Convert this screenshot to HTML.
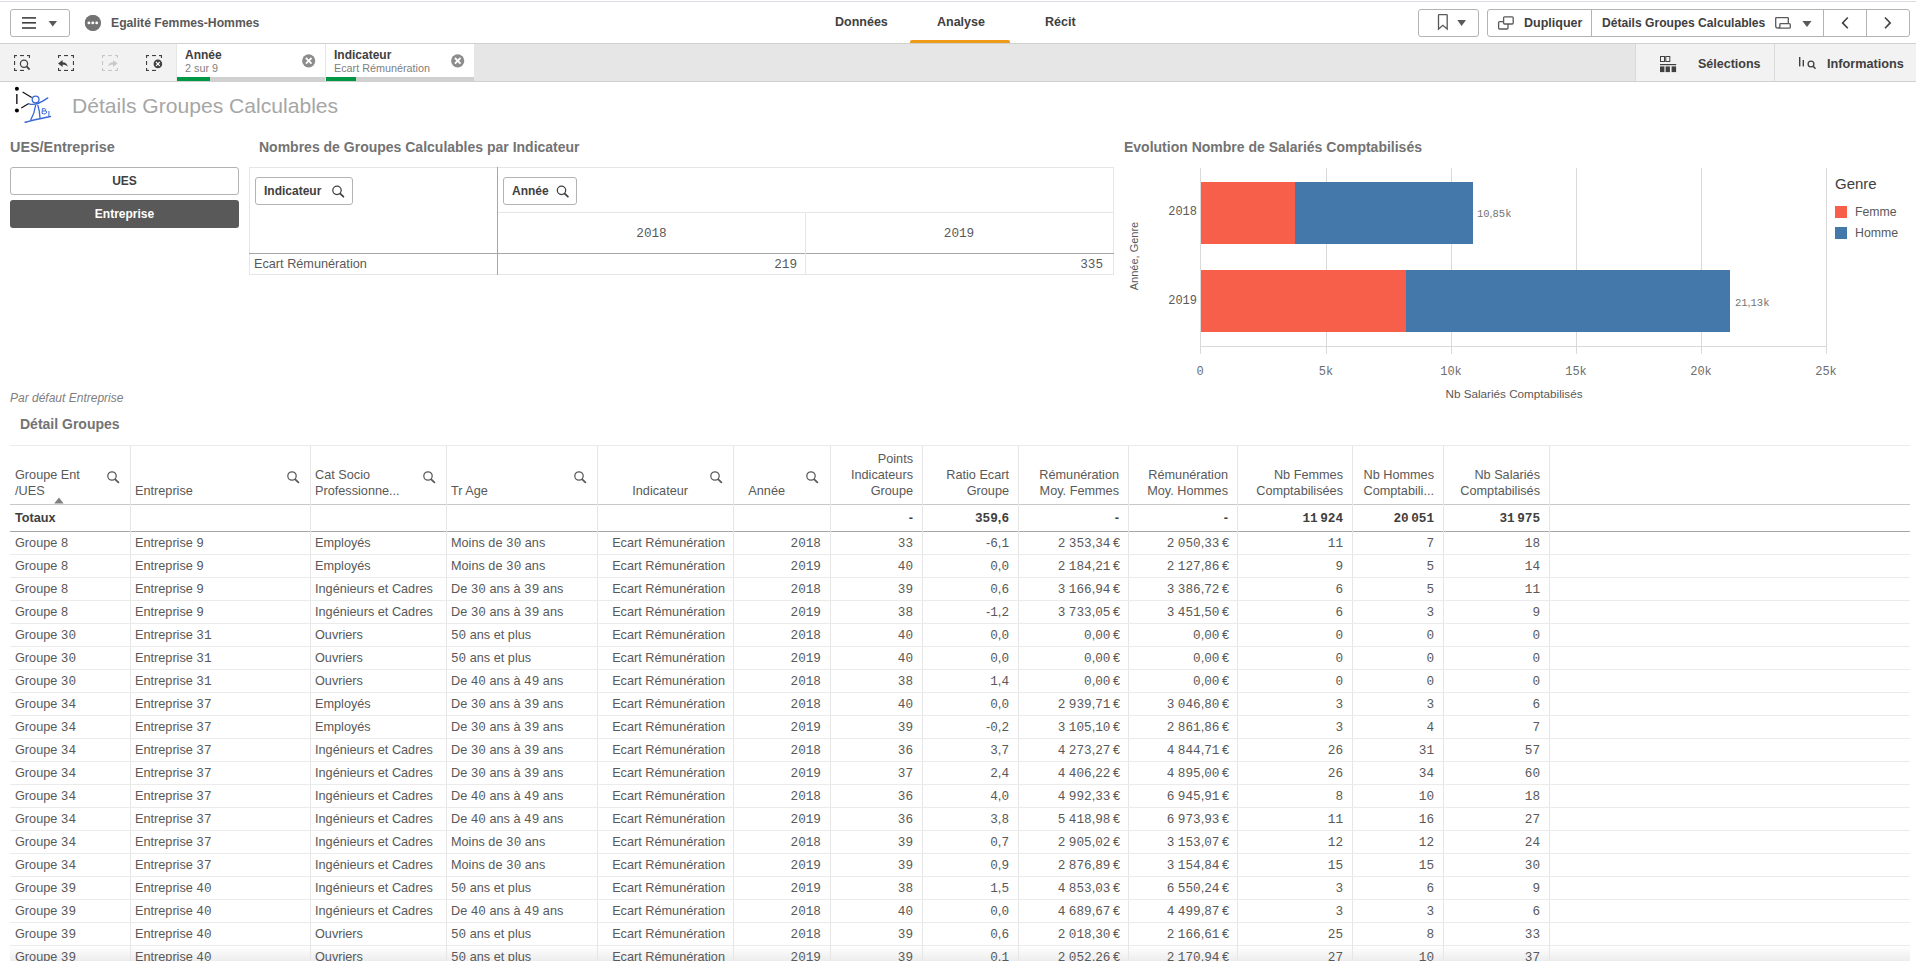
<!DOCTYPE html>
<html><head><meta charset="utf-8"><style>
*{box-sizing:border-box;margin:0;padding:0}
html,body{width:1916px;height:968px;overflow:hidden;background:#fff;font-family:"Liberation Sans",sans-serif;color:#595959;position:relative}
.a{position:absolute;white-space:nowrap}
.d{font-family:"Liberation Mono",monospace}
/* top bar */
#top{position:absolute;left:0;top:0;width:1916px;height:43px;background:#fff;border-top:1px solid #fff}
#top:before{content:"";position:absolute;left:0;top:0;width:1916px;height:1px;background:#dadce1}
.btn{position:absolute;border:1px solid #b3b3b3;border-radius:3px;background:#fff}
.tb{font-weight:bold;font-size:12.5px;color:#404040}
#tool{position:absolute;left:0;top:43px;width:1916px;height:39px;background:#e6e6e6;border-top:1px solid #d0d0d0;border-bottom:1px solid #d0d0d0}
.chip{position:absolute;top:0;height:37px;width:148px;background:#fff}
.chip .g{position:absolute;left:0;bottom:0;height:4px;width:100%;background:#d0d0d0}
.chip .g i{position:absolute;left:0;top:0;height:4px;background:#009845}
.ct{position:absolute;left:8px;top:4px;font-size:12px;font-weight:bold;color:#404040}
.cs{position:absolute;left:8px;top:18px;font-size:10.8px;color:#808080}
.cx{position:absolute;top:10px;width:14px;height:14px;border-radius:50%;background:#8c8c8c}
/* table */
.vl{position:absolute;top:446px;width:1px;height:515px;background:#e6e6e6}
.row{position:absolute;left:10px;width:1900px;height:1px;background:#ebebeb}
.c{position:absolute;height:22px;line-height:22px;font-size:12.7px;white-space:nowrap;color:#595959}
.r{text-align:right}
.h{position:absolute;font-size:12.7px;line-height:16px;white-space:nowrap;color:#595959}
.tt{font-weight:bold;color:#404040}

</style></head><body>
<div id="top">
  <div class="btn" style="left:10px;top:8px;width:60px;height:28px"></div>
  <div class="a" style="left:85px;top:14px;width:16px;height:16px;border-radius:50%;background:#808080"></div>
  <div class="a tb" style="left:111px;top:15px;color:#595959;font-size:12.2px">Egalité Femmes-Hommes</div>
  <div class="a tb" style="left:835px;top:14px">Données</div>
  <div class="a tb" style="left:937px;top:14px">Analyse</div>
  <div class="a" style="left:910px;top:39px;width:100px;height:3px;background:#f09a1a;border-radius:2px 2px 0 0"></div>
  <div class="a tb" style="left:1045px;top:14px">Récit</div>
  <div class="btn" style="left:1418px;top:8px;width:61px;height:28px"></div>
  <div class="btn" style="left:1487px;top:8px;width:423px;height:28px"></div>
  <div class="a tb" style="left:1524px;top:15px">Dupliquer</div>
  <div class="a" style="left:1591px;top:9px;width:1px;height:27px;background:#b3b3b3"></div>
  <div class="a" style="left:1823px;top:9px;width:1px;height:27px;background:#b3b3b3"></div>
  <div class="a" style="left:1866px;top:9px;width:1px;height:27px;background:#b3b3b3"></div>
  <div class="a tb" style="left:1602px;top:15px;font-size:12.1px">Détails Groupes Calculables</div>
</div>
<div id="tool">
  <div class="a" style="left:0;top:0;width:176px;height:37px;background:#f2f2f2"></div>
  <div class="chip" style="left:177px"><div class="ct">Année</div><div class="cs">2 sur 9</div><div class="g"><i style="width:33px"></i></div></div>
  <div class="chip" style="left:326px"><div class="ct">Indicateur</div><div class="cs">Ecart Rémunération</div><div class="g"><i style="width:30px"></i></div></div>
  <div class="a" style="left:1635px;top:0;width:281px;height:37px;background:#f2f2f2;border-left:1px solid #d9d9d9"></div>
  <div class="a tb" style="left:1698px;top:13px">Sélections</div>
  <div class="a" style="left:1774px;top:0;width:1px;height:37px;background:#d9d9d9"></div>
  <div class="a tb" style="left:1827px;top:13px;font-size:12.7px">Informations</div>
</div>
<div class="a" style="left:72px;top:94px;font-size:21.1px;color:#a6a6a6">Détails Groupes Calculables</div>
<div class="a" style="left:10px;top:139px;font-size:14.4px;font-weight:bold;color:#737373">UES/Entreprise</div>
<div class="btn" style="left:10px;top:167px;width:229px;height:28px;text-align:center;line-height:26px;font-size:12px;font-weight:bold;color:#404040">UES</div>
<div class="a" style="left:10px;top:200px;width:229px;height:28px;background:#595959;border-radius:3px;text-align:center;line-height:28px;font-size:12px;font-weight:bold;color:#fff">Entreprise</div>
<div class="a" style="left:259px;top:139px;font-size:14px;font-weight:bold;color:#737373">Nombres de Groupes Calculables par Indicateur</div>
<div class="a" style="left:1124px;top:139px;font-size:14px;font-weight:bold;color:#737373">Evolution Nombre de Salariés Comptabilisés</div>
<div class="a" style="left:10px;top:391px;font-size:12px;font-style:italic;color:#808080">Par défaut Entreprise</div>
<div class="a" style="left:20px;top:416px;font-size:14px;font-weight:bold;color:#737373">Détail Groupes</div>
<div class="a" style="left:10px;top:445px;width:1900px;height:1px;background:#ebebeb"></div>
<div class="a" style="left:10px;top:504px;width:1900px;height:1px;background:#c8c8c8"></div>
<div class="a" style="left:10px;top:531px;width:1900px;height:1px;background:#a6a6a6"></div>
<svg class="a" style="left:0;top:0;pointer-events:none" width="1916" height="130">
<!-- hamburger -->
<g fill="#404040"><rect x="22" y="17.1" width="14" height="1.6"/><rect x="22" y="22" width="14" height="1.6"/><rect x="22" y="27.2" width="14" height="1.6"/></g>
<path d="M48.6,21 H57 L52.8,26.6 Z" fill="#595959"/>
<!-- dots -->
<circle cx="92.8" cy="22.9" r="8" fill="#737373"/>
<g fill="#fff"><circle cx="88.9" cy="22.9" r="1.45"/><circle cx="92.8" cy="22.9" r="1.45"/><circle cx="96.7" cy="22.9" r="1.45"/></g>
<!-- bookmark -->
<path d="M1438.5,29 V15.2 Q1438.5,14.6 1439.1,14.6 H1446.6 Q1447.2,14.6 1447.2,15.2 V29 L1442.9,25.3 Z" fill="none" stroke="#595959" stroke-width="1.3" stroke-linejoin="miter"/>
<path d="M1457.3,19.9 H1466 L1461.6,25.9 Z" fill="#595959"/>
<!-- duplicate -->
<rect x="1498.6" y="21.6" width="9.4" height="7.4" rx="1" fill="none" stroke="#595959" stroke-width="1.3"/>
<rect x="1503.6" y="16.8" width="9.6" height="7.2" rx="1" fill="#fff" stroke="#595959" stroke-width="1.3"/>
<!-- sheet icon -->
<path d="M1788.3,23.6 V18.2 Q1788.3,17.6 1787.7,17.6 H1776.3 Q1775.7,17.6 1775.7,18.2 V26 Q1775.7,28.1 1777.8,28.1 H1789.2 Q1790.3,28.1 1790.3,26.9 V25 Q1790.3,23.6 1789.2,23.6 H1780.6 Q1779.9,23.6 1779.9,24.3 V26 Q1779.9,28.1 1777.8,28.1" fill="none" stroke="#595959" stroke-width="1.3"/>
<path d="M1802.4,21.1 H1811.5 L1807,27 Z" fill="#595959"/>
<!-- prev/next -->
<path d="M1847.8,17.5 L1842.6,22.9 L1847.8,28.3" fill="none" stroke="#404040" stroke-width="1.6"/>
<path d="M1885,17.5 L1890.2,22.9 L1885,28.3" fill="none" stroke="#404040" stroke-width="1.6"/>
<!-- toolbar icons -->
<g fill="#404040" transform="translate(0,0)"><rect x="14" y="55" width="3" height="1.1"/><rect x="14" y="55" width="1.1" height="3"/><rect x="20" y="55" width="4" height="1.1"/><rect x="27" y="55" width="3" height="1.1"/><rect x="28.9" y="55" width="1.1" height="3"/><rect x="14" y="61" width="1.1" height="4"/><rect x="14" y="69.9" width="3" height="1.1"/><rect x="14" y="68" width="1.1" height="3"/><rect x="20" y="69.9" width="4" height="1.1"/></g>
<circle cx="24" cy="63.8" r="3.6" fill="none" stroke="#404040" stroke-width="1.25"/>
<path d="M26.6,66.4 L29.6,69.6" stroke="#404040" stroke-width="1.8"/>
<g fill="#404040" transform="translate(44,0)"><rect x="14" y="55" width="3" height="1.1"/><rect x="14" y="55" width="1.1" height="3"/><rect x="20" y="55" width="4" height="1.1"/><rect x="27" y="55" width="3" height="1.1"/><rect x="28.9" y="55" width="1.1" height="3"/><rect x="28.9" y="61" width="1.1" height="4"/><rect x="14" y="69.9" width="3" height="1.1"/><rect x="14" y="68" width="1.1" height="3"/><rect x="20" y="69.9" width="4" height="1.1"/><rect x="27" y="69.9" width="3" height="1.1"/><rect x="28.9" y="68" width="1.1" height="3"/></g>
<path d="M58,63.5 L62.6,60 V62.2 C65.5,62.3 67.3,64 67.9,66.8 C66.6,65.3 65,64.8 62.6,64.8 V67 Z" fill="#404040"/>
<g fill="#c8c8c8" transform="translate(88,0)"><rect x="14" y="55" width="3" height="1.1"/><rect x="14" y="55" width="1.1" height="3"/><rect x="20" y="55" width="4" height="1.1"/><rect x="27" y="55" width="3" height="1.1"/><rect x="28.9" y="55" width="1.1" height="3"/><rect x="14" y="61" width="1.1" height="4"/><rect x="14" y="69.9" width="3" height="1.1"/><rect x="14" y="68" width="1.1" height="3"/><rect x="20" y="69.9" width="4" height="1.1"/><rect x="27" y="69.9" width="3" height="1.1"/><rect x="28.9" y="68" width="1.1" height="3"/></g>
<path d="M117.6,63.5 L113,60 V62.2 C110.1,62.3 108.3,64 107.7,66.8 C109,65.3 110.6,64.8 113,64.8 V67 Z" fill="#fff"/>
<path d="M117.6,63.5 L113,60 V62.2 C110.1,62.3 108.3,64 107.7,66.8 C109,65.3 110.6,64.8 113,64.8 V67 Z" fill="#c8c8c8"/>
<g fill="#404040" transform="translate(132,0)"><rect x="14" y="55" width="3" height="1.1"/><rect x="14" y="55" width="1.1" height="3"/><rect x="20" y="55" width="4" height="1.1"/><rect x="27" y="55" width="3" height="1.1"/><rect x="28.9" y="55" width="1.1" height="3"/><rect x="14" y="61" width="1.1" height="4"/><rect x="14" y="69.9" width="3" height="1.1"/><rect x="14" y="68" width="1.1" height="3"/><rect x="20" y="69.9" width="4" height="1.1"/></g>
<circle cx="157.9" cy="63.9" r="4.3" fill="#404040"/>
<path d="M156,62 L159.8,65.8 M159.8,62 L156,65.8" stroke="#fff" stroke-width="1.1"/>
<!-- chip X -->
<circle cx="308.7" cy="60.8" r="6.6" fill="#8c8c8c"/>
<path d="M305.9,58 L311.5,63.6 M311.5,58 L305.9,63.6" stroke="#fff" stroke-width="1.8"/>
<circle cx="457.7" cy="60.8" r="6.6" fill="#8c8c8c"/>
<path d="M454.9,58 L460.5,63.6 M460.5,58 L454.9,63.6" stroke="#fff" stroke-width="1.8"/>
<!-- selections icon -->
<g fill="none" stroke="#404040" stroke-width="1"><rect x="1660.5" y="56.5" width="4" height="5"/><rect x="1665.8" y="56.5" width="4" height="5"/></g>
<rect x="1660" y="64" width="16.2" height="1.2" fill="#404040"/>
<g fill="#404040"><rect x="1660" y="66.4" width="4.4" height="5.7"/><rect x="1665.6" y="66.4" width="4.3" height="5.7"/><rect x="1671.6" y="66.4" width="4.5" height="5.7"/></g>
<!-- info icon -->
<g fill="#404040"><rect x="1799" y="57" width="1.4" height="9.4"/><rect x="1802.6" y="60" width="1.4" height="6.4"/></g>
<circle cx="1811" cy="64" r="2.9" fill="none" stroke="#404040" stroke-width="1.3"/>
<path d="M1813,66 L1815.5,68.8" stroke="#404040" stroke-width="1.5"/>
<!-- logo -->
<g fill="#000"><circle cx="16.9" cy="88.8" r="2"/><circle cx="16.9" cy="110.5" r="2"/></g>
<path d="M16.8,94 L16.8,104" stroke="#333" stroke-width="1.6"/>
<path d="M22.6,92 L31.7,97.5 M21.3,107.9 L28.7,103.6" stroke="#111" stroke-width="1.2"/>
<g fill="none" stroke="#3a6ad4" stroke-width="1.3" stroke-linecap="round">
<circle cx="35.6" cy="99.5" r="3.4"/>
<path d="M29.1,103.8 Q36,106.5 47.8,97.9"/>
<path d="M35.6,105.3 Q34.5,113 30.9,119.6 M37.8,105.3 Q39.8,111 40,117.9"/>
<path d="M25.2,122.3 Q30,120.5 50.4,116.4" stroke-width="1.5"/>
<path d="M42.8,108.6 Q46.5,108.2 45.7,110.6 Q48,111.8 45.5,113.8 Q43.5,114.2 42.4,113.6 Z M42.6,111 H45.5" stroke-width="1"/>
<path d="M48.9,111.4 V116.4" stroke-width="1"/>
</g>
</svg>


<!--SRCH-->
<div class="a" style="left:10px;top:946px;width:1900px;height:15px;background:linear-gradient(#fff,#ededed)"></div>
<div class="tbl">
<div class="vl" style="left:130px"></div>
<div class="vl" style="left:310px"></div>
<div class="vl" style="left:446px"></div>
<div class="vl" style="left:597px"></div>
<div class="vl" style="left:733px"></div>
<div class="vl" style="left:830px"></div>
<div class="vl" style="left:922px"></div>
<div class="vl" style="left:1018px"></div>
<div class="vl" style="left:1128px"></div>
<div class="vl" style="left:1237px"></div>
<div class="vl" style="left:1352px"></div>
<div class="vl" style="left:1443px"></div>
<div class="vl" style="left:1549px"></div>
</div>
<div class="row" style="top:554px"></div>
<div class="c" style="left:15px;top:532px">Groupe <span class="d">8</span></div>
<div class="c" style="left:135px;top:532px">Entreprise <span class="d">9</span></div>
<div class="c" style="left:315px;top:532px">Employés</div>
<div class="c" style="left:451px;top:532px">Moins de <span class="d">30</span> ans</div>
<div class="c r" style="left:597px;width:128px;top:532px">Ecart Rémunération</div>
<div class="c r" style="left:733px;width:88px;top:532px"><span class="d">2018</span></div>
<div class="c r" style="left:830px;width:83px;top:532px"><span class="d">33</span></div>
<div class="c r" style="left:922px;width:87px;top:532px">-<span class="d">6</span>,<span class="d">1</span></div>
<div class="c r" style="left:1018px;width:102px;top:532px"><span class="d">2</span> <span class="d">353</span>,<span class="d">34</span>&#8201;€</div>
<div class="c r" style="left:1128px;width:101px;top:532px"><span class="d">2</span> <span class="d">050</span>,<span class="d">33</span>&#8201;€</div>
<div class="c r" style="left:1237px;width:106px;top:532px"><span class="d">11</span></div>
<div class="c r" style="left:1352px;width:82px;top:532px"><span class="d">7</span></div>
<div class="c r" style="left:1443px;width:97px;top:532px"><span class="d">18</span></div>
<div class="row" style="top:577px"></div>
<div class="c" style="left:15px;top:555px">Groupe <span class="d">8</span></div>
<div class="c" style="left:135px;top:555px">Entreprise <span class="d">9</span></div>
<div class="c" style="left:315px;top:555px">Employés</div>
<div class="c" style="left:451px;top:555px">Moins de <span class="d">30</span> ans</div>
<div class="c r" style="left:597px;width:128px;top:555px">Ecart Rémunération</div>
<div class="c r" style="left:733px;width:88px;top:555px"><span class="d">2019</span></div>
<div class="c r" style="left:830px;width:83px;top:555px"><span class="d">40</span></div>
<div class="c r" style="left:922px;width:87px;top:555px"><span class="d">0</span>,<span class="d">0</span></div>
<div class="c r" style="left:1018px;width:102px;top:555px"><span class="d">2</span> <span class="d">184</span>,<span class="d">21</span>&#8201;€</div>
<div class="c r" style="left:1128px;width:101px;top:555px"><span class="d">2</span> <span class="d">127</span>,<span class="d">86</span>&#8201;€</div>
<div class="c r" style="left:1237px;width:106px;top:555px"><span class="d">9</span></div>
<div class="c r" style="left:1352px;width:82px;top:555px"><span class="d">5</span></div>
<div class="c r" style="left:1443px;width:97px;top:555px"><span class="d">14</span></div>
<div class="row" style="top:600px"></div>
<div class="c" style="left:15px;top:578px">Groupe <span class="d">8</span></div>
<div class="c" style="left:135px;top:578px">Entreprise <span class="d">9</span></div>
<div class="c" style="left:315px;top:578px">Ingénieurs et Cadres</div>
<div class="c" style="left:451px;top:578px">De <span class="d">30</span> ans à <span class="d">39</span> ans</div>
<div class="c r" style="left:597px;width:128px;top:578px">Ecart Rémunération</div>
<div class="c r" style="left:733px;width:88px;top:578px"><span class="d">2018</span></div>
<div class="c r" style="left:830px;width:83px;top:578px"><span class="d">39</span></div>
<div class="c r" style="left:922px;width:87px;top:578px"><span class="d">0</span>,<span class="d">6</span></div>
<div class="c r" style="left:1018px;width:102px;top:578px"><span class="d">3</span> <span class="d">166</span>,<span class="d">94</span>&#8201;€</div>
<div class="c r" style="left:1128px;width:101px;top:578px"><span class="d">3</span> <span class="d">386</span>,<span class="d">72</span>&#8201;€</div>
<div class="c r" style="left:1237px;width:106px;top:578px"><span class="d">6</span></div>
<div class="c r" style="left:1352px;width:82px;top:578px"><span class="d">5</span></div>
<div class="c r" style="left:1443px;width:97px;top:578px"><span class="d">11</span></div>
<div class="row" style="top:623px"></div>
<div class="c" style="left:15px;top:601px">Groupe <span class="d">8</span></div>
<div class="c" style="left:135px;top:601px">Entreprise <span class="d">9</span></div>
<div class="c" style="left:315px;top:601px">Ingénieurs et Cadres</div>
<div class="c" style="left:451px;top:601px">De <span class="d">30</span> ans à <span class="d">39</span> ans</div>
<div class="c r" style="left:597px;width:128px;top:601px">Ecart Rémunération</div>
<div class="c r" style="left:733px;width:88px;top:601px"><span class="d">2019</span></div>
<div class="c r" style="left:830px;width:83px;top:601px"><span class="d">38</span></div>
<div class="c r" style="left:922px;width:87px;top:601px">-<span class="d">1</span>,<span class="d">2</span></div>
<div class="c r" style="left:1018px;width:102px;top:601px"><span class="d">3</span> <span class="d">733</span>,<span class="d">05</span>&#8201;€</div>
<div class="c r" style="left:1128px;width:101px;top:601px"><span class="d">3</span> <span class="d">451</span>,<span class="d">50</span>&#8201;€</div>
<div class="c r" style="left:1237px;width:106px;top:601px"><span class="d">6</span></div>
<div class="c r" style="left:1352px;width:82px;top:601px"><span class="d">3</span></div>
<div class="c r" style="left:1443px;width:97px;top:601px"><span class="d">9</span></div>
<div class="row" style="top:646px"></div>
<div class="c" style="left:15px;top:624px">Groupe <span class="d">30</span></div>
<div class="c" style="left:135px;top:624px">Entreprise <span class="d">31</span></div>
<div class="c" style="left:315px;top:624px">Ouvriers</div>
<div class="c" style="left:451px;top:624px"><span class="d">50</span> ans et plus</div>
<div class="c r" style="left:597px;width:128px;top:624px">Ecart Rémunération</div>
<div class="c r" style="left:733px;width:88px;top:624px"><span class="d">2018</span></div>
<div class="c r" style="left:830px;width:83px;top:624px"><span class="d">40</span></div>
<div class="c r" style="left:922px;width:87px;top:624px"><span class="d">0</span>,<span class="d">0</span></div>
<div class="c r" style="left:1018px;width:102px;top:624px"><span class="d">0</span>,<span class="d">00</span>&#8201;€</div>
<div class="c r" style="left:1128px;width:101px;top:624px"><span class="d">0</span>,<span class="d">00</span>&#8201;€</div>
<div class="c r" style="left:1237px;width:106px;top:624px"><span class="d">0</span></div>
<div class="c r" style="left:1352px;width:82px;top:624px"><span class="d">0</span></div>
<div class="c r" style="left:1443px;width:97px;top:624px"><span class="d">0</span></div>
<div class="row" style="top:669px"></div>
<div class="c" style="left:15px;top:647px">Groupe <span class="d">30</span></div>
<div class="c" style="left:135px;top:647px">Entreprise <span class="d">31</span></div>
<div class="c" style="left:315px;top:647px">Ouvriers</div>
<div class="c" style="left:451px;top:647px"><span class="d">50</span> ans et plus</div>
<div class="c r" style="left:597px;width:128px;top:647px">Ecart Rémunération</div>
<div class="c r" style="left:733px;width:88px;top:647px"><span class="d">2019</span></div>
<div class="c r" style="left:830px;width:83px;top:647px"><span class="d">40</span></div>
<div class="c r" style="left:922px;width:87px;top:647px"><span class="d">0</span>,<span class="d">0</span></div>
<div class="c r" style="left:1018px;width:102px;top:647px"><span class="d">0</span>,<span class="d">00</span>&#8201;€</div>
<div class="c r" style="left:1128px;width:101px;top:647px"><span class="d">0</span>,<span class="d">00</span>&#8201;€</div>
<div class="c r" style="left:1237px;width:106px;top:647px"><span class="d">0</span></div>
<div class="c r" style="left:1352px;width:82px;top:647px"><span class="d">0</span></div>
<div class="c r" style="left:1443px;width:97px;top:647px"><span class="d">0</span></div>
<div class="row" style="top:692px"></div>
<div class="c" style="left:15px;top:670px">Groupe <span class="d">30</span></div>
<div class="c" style="left:135px;top:670px">Entreprise <span class="d">31</span></div>
<div class="c" style="left:315px;top:670px">Ouvriers</div>
<div class="c" style="left:451px;top:670px">De <span class="d">40</span> ans à <span class="d">49</span> ans</div>
<div class="c r" style="left:597px;width:128px;top:670px">Ecart Rémunération</div>
<div class="c r" style="left:733px;width:88px;top:670px"><span class="d">2018</span></div>
<div class="c r" style="left:830px;width:83px;top:670px"><span class="d">38</span></div>
<div class="c r" style="left:922px;width:87px;top:670px"><span class="d">1</span>,<span class="d">4</span></div>
<div class="c r" style="left:1018px;width:102px;top:670px"><span class="d">0</span>,<span class="d">00</span>&#8201;€</div>
<div class="c r" style="left:1128px;width:101px;top:670px"><span class="d">0</span>,<span class="d">00</span>&#8201;€</div>
<div class="c r" style="left:1237px;width:106px;top:670px"><span class="d">0</span></div>
<div class="c r" style="left:1352px;width:82px;top:670px"><span class="d">0</span></div>
<div class="c r" style="left:1443px;width:97px;top:670px"><span class="d">0</span></div>
<div class="row" style="top:715px"></div>
<div class="c" style="left:15px;top:693px">Groupe <span class="d">34</span></div>
<div class="c" style="left:135px;top:693px">Entreprise <span class="d">37</span></div>
<div class="c" style="left:315px;top:693px">Employés</div>
<div class="c" style="left:451px;top:693px">De <span class="d">30</span> ans à <span class="d">39</span> ans</div>
<div class="c r" style="left:597px;width:128px;top:693px">Ecart Rémunération</div>
<div class="c r" style="left:733px;width:88px;top:693px"><span class="d">2018</span></div>
<div class="c r" style="left:830px;width:83px;top:693px"><span class="d">40</span></div>
<div class="c r" style="left:922px;width:87px;top:693px"><span class="d">0</span>,<span class="d">0</span></div>
<div class="c r" style="left:1018px;width:102px;top:693px"><span class="d">2</span> <span class="d">939</span>,<span class="d">71</span>&#8201;€</div>
<div class="c r" style="left:1128px;width:101px;top:693px"><span class="d">3</span> <span class="d">046</span>,<span class="d">80</span>&#8201;€</div>
<div class="c r" style="left:1237px;width:106px;top:693px"><span class="d">3</span></div>
<div class="c r" style="left:1352px;width:82px;top:693px"><span class="d">3</span></div>
<div class="c r" style="left:1443px;width:97px;top:693px"><span class="d">6</span></div>
<div class="row" style="top:738px"></div>
<div class="c" style="left:15px;top:716px">Groupe <span class="d">34</span></div>
<div class="c" style="left:135px;top:716px">Entreprise <span class="d">37</span></div>
<div class="c" style="left:315px;top:716px">Employés</div>
<div class="c" style="left:451px;top:716px">De <span class="d">30</span> ans à <span class="d">39</span> ans</div>
<div class="c r" style="left:597px;width:128px;top:716px">Ecart Rémunération</div>
<div class="c r" style="left:733px;width:88px;top:716px"><span class="d">2019</span></div>
<div class="c r" style="left:830px;width:83px;top:716px"><span class="d">39</span></div>
<div class="c r" style="left:922px;width:87px;top:716px">-<span class="d">0</span>,<span class="d">2</span></div>
<div class="c r" style="left:1018px;width:102px;top:716px"><span class="d">3</span> <span class="d">105</span>,<span class="d">10</span>&#8201;€</div>
<div class="c r" style="left:1128px;width:101px;top:716px"><span class="d">2</span> <span class="d">861</span>,<span class="d">86</span>&#8201;€</div>
<div class="c r" style="left:1237px;width:106px;top:716px"><span class="d">3</span></div>
<div class="c r" style="left:1352px;width:82px;top:716px"><span class="d">4</span></div>
<div class="c r" style="left:1443px;width:97px;top:716px"><span class="d">7</span></div>
<div class="row" style="top:761px"></div>
<div class="c" style="left:15px;top:739px">Groupe <span class="d">34</span></div>
<div class="c" style="left:135px;top:739px">Entreprise <span class="d">37</span></div>
<div class="c" style="left:315px;top:739px">Ingénieurs et Cadres</div>
<div class="c" style="left:451px;top:739px">De <span class="d">30</span> ans à <span class="d">39</span> ans</div>
<div class="c r" style="left:597px;width:128px;top:739px">Ecart Rémunération</div>
<div class="c r" style="left:733px;width:88px;top:739px"><span class="d">2018</span></div>
<div class="c r" style="left:830px;width:83px;top:739px"><span class="d">36</span></div>
<div class="c r" style="left:922px;width:87px;top:739px"><span class="d">3</span>,<span class="d">7</span></div>
<div class="c r" style="left:1018px;width:102px;top:739px"><span class="d">4</span> <span class="d">273</span>,<span class="d">27</span>&#8201;€</div>
<div class="c r" style="left:1128px;width:101px;top:739px"><span class="d">4</span> <span class="d">844</span>,<span class="d">71</span>&#8201;€</div>
<div class="c r" style="left:1237px;width:106px;top:739px"><span class="d">26</span></div>
<div class="c r" style="left:1352px;width:82px;top:739px"><span class="d">31</span></div>
<div class="c r" style="left:1443px;width:97px;top:739px"><span class="d">57</span></div>
<div class="row" style="top:784px"></div>
<div class="c" style="left:15px;top:762px">Groupe <span class="d">34</span></div>
<div class="c" style="left:135px;top:762px">Entreprise <span class="d">37</span></div>
<div class="c" style="left:315px;top:762px">Ingénieurs et Cadres</div>
<div class="c" style="left:451px;top:762px">De <span class="d">30</span> ans à <span class="d">39</span> ans</div>
<div class="c r" style="left:597px;width:128px;top:762px">Ecart Rémunération</div>
<div class="c r" style="left:733px;width:88px;top:762px"><span class="d">2019</span></div>
<div class="c r" style="left:830px;width:83px;top:762px"><span class="d">37</span></div>
<div class="c r" style="left:922px;width:87px;top:762px"><span class="d">2</span>,<span class="d">4</span></div>
<div class="c r" style="left:1018px;width:102px;top:762px"><span class="d">4</span> <span class="d">406</span>,<span class="d">22</span>&#8201;€</div>
<div class="c r" style="left:1128px;width:101px;top:762px"><span class="d">4</span> <span class="d">895</span>,<span class="d">00</span>&#8201;€</div>
<div class="c r" style="left:1237px;width:106px;top:762px"><span class="d">26</span></div>
<div class="c r" style="left:1352px;width:82px;top:762px"><span class="d">34</span></div>
<div class="c r" style="left:1443px;width:97px;top:762px"><span class="d">60</span></div>
<div class="row" style="top:807px"></div>
<div class="c" style="left:15px;top:785px">Groupe <span class="d">34</span></div>
<div class="c" style="left:135px;top:785px">Entreprise <span class="d">37</span></div>
<div class="c" style="left:315px;top:785px">Ingénieurs et Cadres</div>
<div class="c" style="left:451px;top:785px">De <span class="d">40</span> ans à <span class="d">49</span> ans</div>
<div class="c r" style="left:597px;width:128px;top:785px">Ecart Rémunération</div>
<div class="c r" style="left:733px;width:88px;top:785px"><span class="d">2018</span></div>
<div class="c r" style="left:830px;width:83px;top:785px"><span class="d">36</span></div>
<div class="c r" style="left:922px;width:87px;top:785px"><span class="d">4</span>,<span class="d">0</span></div>
<div class="c r" style="left:1018px;width:102px;top:785px"><span class="d">4</span> <span class="d">992</span>,<span class="d">33</span>&#8201;€</div>
<div class="c r" style="left:1128px;width:101px;top:785px"><span class="d">6</span> <span class="d">945</span>,<span class="d">91</span>&#8201;€</div>
<div class="c r" style="left:1237px;width:106px;top:785px"><span class="d">8</span></div>
<div class="c r" style="left:1352px;width:82px;top:785px"><span class="d">10</span></div>
<div class="c r" style="left:1443px;width:97px;top:785px"><span class="d">18</span></div>
<div class="row" style="top:830px"></div>
<div class="c" style="left:15px;top:808px">Groupe <span class="d">34</span></div>
<div class="c" style="left:135px;top:808px">Entreprise <span class="d">37</span></div>
<div class="c" style="left:315px;top:808px">Ingénieurs et Cadres</div>
<div class="c" style="left:451px;top:808px">De <span class="d">40</span> ans à <span class="d">49</span> ans</div>
<div class="c r" style="left:597px;width:128px;top:808px">Ecart Rémunération</div>
<div class="c r" style="left:733px;width:88px;top:808px"><span class="d">2019</span></div>
<div class="c r" style="left:830px;width:83px;top:808px"><span class="d">36</span></div>
<div class="c r" style="left:922px;width:87px;top:808px"><span class="d">3</span>,<span class="d">8</span></div>
<div class="c r" style="left:1018px;width:102px;top:808px"><span class="d">5</span> <span class="d">418</span>,<span class="d">98</span>&#8201;€</div>
<div class="c r" style="left:1128px;width:101px;top:808px"><span class="d">6</span> <span class="d">973</span>,<span class="d">93</span>&#8201;€</div>
<div class="c r" style="left:1237px;width:106px;top:808px"><span class="d">11</span></div>
<div class="c r" style="left:1352px;width:82px;top:808px"><span class="d">16</span></div>
<div class="c r" style="left:1443px;width:97px;top:808px"><span class="d">27</span></div>
<div class="row" style="top:853px"></div>
<div class="c" style="left:15px;top:831px">Groupe <span class="d">34</span></div>
<div class="c" style="left:135px;top:831px">Entreprise <span class="d">37</span></div>
<div class="c" style="left:315px;top:831px">Ingénieurs et Cadres</div>
<div class="c" style="left:451px;top:831px">Moins de <span class="d">30</span> ans</div>
<div class="c r" style="left:597px;width:128px;top:831px">Ecart Rémunération</div>
<div class="c r" style="left:733px;width:88px;top:831px"><span class="d">2018</span></div>
<div class="c r" style="left:830px;width:83px;top:831px"><span class="d">39</span></div>
<div class="c r" style="left:922px;width:87px;top:831px"><span class="d">0</span>,<span class="d">7</span></div>
<div class="c r" style="left:1018px;width:102px;top:831px"><span class="d">2</span> <span class="d">905</span>,<span class="d">02</span>&#8201;€</div>
<div class="c r" style="left:1128px;width:101px;top:831px"><span class="d">3</span> <span class="d">153</span>,<span class="d">07</span>&#8201;€</div>
<div class="c r" style="left:1237px;width:106px;top:831px"><span class="d">12</span></div>
<div class="c r" style="left:1352px;width:82px;top:831px"><span class="d">12</span></div>
<div class="c r" style="left:1443px;width:97px;top:831px"><span class="d">24</span></div>
<div class="row" style="top:876px"></div>
<div class="c" style="left:15px;top:854px">Groupe <span class="d">34</span></div>
<div class="c" style="left:135px;top:854px">Entreprise <span class="d">37</span></div>
<div class="c" style="left:315px;top:854px">Ingénieurs et Cadres</div>
<div class="c" style="left:451px;top:854px">Moins de <span class="d">30</span> ans</div>
<div class="c r" style="left:597px;width:128px;top:854px">Ecart Rémunération</div>
<div class="c r" style="left:733px;width:88px;top:854px"><span class="d">2019</span></div>
<div class="c r" style="left:830px;width:83px;top:854px"><span class="d">39</span></div>
<div class="c r" style="left:922px;width:87px;top:854px"><span class="d">0</span>,<span class="d">9</span></div>
<div class="c r" style="left:1018px;width:102px;top:854px"><span class="d">2</span> <span class="d">876</span>,<span class="d">89</span>&#8201;€</div>
<div class="c r" style="left:1128px;width:101px;top:854px"><span class="d">3</span> <span class="d">154</span>,<span class="d">84</span>&#8201;€</div>
<div class="c r" style="left:1237px;width:106px;top:854px"><span class="d">15</span></div>
<div class="c r" style="left:1352px;width:82px;top:854px"><span class="d">15</span></div>
<div class="c r" style="left:1443px;width:97px;top:854px"><span class="d">30</span></div>
<div class="row" style="top:899px"></div>
<div class="c" style="left:15px;top:877px">Groupe <span class="d">39</span></div>
<div class="c" style="left:135px;top:877px">Entreprise <span class="d">40</span></div>
<div class="c" style="left:315px;top:877px">Ingénieurs et Cadres</div>
<div class="c" style="left:451px;top:877px"><span class="d">50</span> ans et plus</div>
<div class="c r" style="left:597px;width:128px;top:877px">Ecart Rémunération</div>
<div class="c r" style="left:733px;width:88px;top:877px"><span class="d">2019</span></div>
<div class="c r" style="left:830px;width:83px;top:877px"><span class="d">38</span></div>
<div class="c r" style="left:922px;width:87px;top:877px"><span class="d">1</span>,<span class="d">5</span></div>
<div class="c r" style="left:1018px;width:102px;top:877px"><span class="d">4</span> <span class="d">853</span>,<span class="d">03</span>&#8201;€</div>
<div class="c r" style="left:1128px;width:101px;top:877px"><span class="d">6</span> <span class="d">550</span>,<span class="d">24</span>&#8201;€</div>
<div class="c r" style="left:1237px;width:106px;top:877px"><span class="d">3</span></div>
<div class="c r" style="left:1352px;width:82px;top:877px"><span class="d">6</span></div>
<div class="c r" style="left:1443px;width:97px;top:877px"><span class="d">9</span></div>
<div class="row" style="top:922px"></div>
<div class="c" style="left:15px;top:900px">Groupe <span class="d">39</span></div>
<div class="c" style="left:135px;top:900px">Entreprise <span class="d">40</span></div>
<div class="c" style="left:315px;top:900px">Ingénieurs et Cadres</div>
<div class="c" style="left:451px;top:900px">De <span class="d">40</span> ans à <span class="d">49</span> ans</div>
<div class="c r" style="left:597px;width:128px;top:900px">Ecart Rémunération</div>
<div class="c r" style="left:733px;width:88px;top:900px"><span class="d">2018</span></div>
<div class="c r" style="left:830px;width:83px;top:900px"><span class="d">40</span></div>
<div class="c r" style="left:922px;width:87px;top:900px"><span class="d">0</span>,<span class="d">0</span></div>
<div class="c r" style="left:1018px;width:102px;top:900px"><span class="d">4</span> <span class="d">689</span>,<span class="d">67</span>&#8201;€</div>
<div class="c r" style="left:1128px;width:101px;top:900px"><span class="d">4</span> <span class="d">499</span>,<span class="d">87</span>&#8201;€</div>
<div class="c r" style="left:1237px;width:106px;top:900px"><span class="d">3</span></div>
<div class="c r" style="left:1352px;width:82px;top:900px"><span class="d">3</span></div>
<div class="c r" style="left:1443px;width:97px;top:900px"><span class="d">6</span></div>
<div class="row" style="top:945px"></div>
<div class="c" style="left:15px;top:923px">Groupe <span class="d">39</span></div>
<div class="c" style="left:135px;top:923px">Entreprise <span class="d">40</span></div>
<div class="c" style="left:315px;top:923px">Ouvriers</div>
<div class="c" style="left:451px;top:923px"><span class="d">50</span> ans et plus</div>
<div class="c r" style="left:597px;width:128px;top:923px">Ecart Rémunération</div>
<div class="c r" style="left:733px;width:88px;top:923px"><span class="d">2018</span></div>
<div class="c r" style="left:830px;width:83px;top:923px"><span class="d">39</span></div>
<div class="c r" style="left:922px;width:87px;top:923px"><span class="d">0</span>,<span class="d">6</span></div>
<div class="c r" style="left:1018px;width:102px;top:923px"><span class="d">2</span> <span class="d">018</span>,<span class="d">30</span>&#8201;€</div>
<div class="c r" style="left:1128px;width:101px;top:923px"><span class="d">2</span> <span class="d">166</span>,<span class="d">61</span>&#8201;€</div>
<div class="c r" style="left:1237px;width:106px;top:923px"><span class="d">25</span></div>
<div class="c r" style="left:1352px;width:82px;top:923px"><span class="d">8</span></div>
<div class="c r" style="left:1443px;width:97px;top:923px"><span class="d">33</span></div>
<div class="c" style="left:15px;top:946px">Groupe <span class="d">39</span></div>
<div class="c" style="left:135px;top:946px">Entreprise <span class="d">40</span></div>
<div class="c" style="left:315px;top:946px">Ouvriers</div>
<div class="c" style="left:451px;top:946px"><span class="d">50</span> ans et plus</div>
<div class="c r" style="left:597px;width:128px;top:946px">Ecart Rémunération</div>
<div class="c r" style="left:733px;width:88px;top:946px"><span class="d">2019</span></div>
<div class="c r" style="left:830px;width:83px;top:946px"><span class="d">39</span></div>
<div class="c r" style="left:922px;width:87px;top:946px"><span class="d">0</span>,<span class="d">1</span></div>
<div class="c r" style="left:1018px;width:102px;top:946px"><span class="d">2</span> <span class="d">052</span>,<span class="d">26</span>&#8201;€</div>
<div class="c r" style="left:1128px;width:101px;top:946px"><span class="d">2</span> <span class="d">170</span>,<span class="d">94</span>&#8201;€</div>
<div class="c r" style="left:1237px;width:106px;top:946px"><span class="d">27</span></div>
<div class="c r" style="left:1352px;width:82px;top:946px"><span class="d">10</span></div>
<div class="c r" style="left:1443px;width:97px;top:946px"><span class="d">37</span></div>
<!-- table header -->
<div class="h" style="left:15px;top:467px">Groupe Ent<br>/UES</div>
<div class="h" style="left:135px;top:483px">Entreprise</div>
<div class="h" style="left:315px;top:467px">Cat Socio<br>Professionne...</div>
<div class="h" style="left:451px;top:483px">Tr Age</div>
<div class="h r" style="left:597px;width:91px;top:483px">Indicateur</div>
<div class="h r" style="left:733px;width:52px;top:483px">Année</div>
<div class="h r" style="left:830px;width:83px;top:451px">Points<br>Indicateurs<br>Groupe</div>
<div class="h r" style="left:922px;width:87px;top:467px">Ratio Ecart<br>Groupe</div>
<div class="h r" style="left:1018px;width:101px;top:467px">Rémunération<br>Moy. Femmes</div>
<div class="h r" style="left:1128px;width:100px;top:467px">Rémunération<br>Moy. Hommes</div>
<div class="h r" style="left:1237px;width:106px;top:467px">Nb Femmes<br>Comptabilisées</div>
<div class="h r" style="left:1352px;width:82px;top:467px">Nb Hommes<br>Comptabili...</div>
<div class="h r" style="left:1443px;width:97px;top:467px">Nb Salariés<br>Comptabilisés</div>
<!-- totals -->
<div class="c tt" style="left:15px;top:507px">Totaux</div>
<div class="c tt r" style="left:830px;width:83px;top:507px">-</div>
<div class="c tt r" style="left:922px;width:87px;top:507px"><span class="d">359</span>,<span class="d">6</span></div>
<div class="c tt r" style="left:1018px;width:101px;top:507px">-</div>
<div class="c tt r" style="left:1128px;width:100px;top:507px">-</div>
<div class="c tt r" style="left:1237px;width:106px;top:507px"><span class="d">11&#8201;924</span></div>
<div class="c tt r" style="left:1352px;width:82px;top:507px"><span class="d">20&#8201;051</span></div>
<div class="c tt r" style="left:1443px;width:97px;top:507px"><span class="d">31&#8201;975</span></div>
<!-- pivot -->
<div class="a" style="left:249px;top:167px;width:865px;height:108px;border:1px solid #e6e6e6"></div>
<div class="a" style="left:497px;top:167px;width:1px;height:108px;background:#a6a6a6"></div>
<div class="a" style="left:249px;top:253px;width:865px;height:1px;background:#a6a6a6"></div>
<div class="a" style="left:498px;top:212px;width:615px;height:1px;background:#e6e6e6"></div>
<div class="a" style="left:805px;top:212px;width:1px;height:62px;background:#e6e6e6"></div>
<div class="btn" style="left:255px;top:177px;width:98px;height:28px"><span class="a" style="left:8px;top:6px;font-size:12px;font-weight:bold;color:#404040">Indicateur</span></div>
<div class="btn" style="left:503px;top:177px;width:74px;height:28px"><span class="a" style="left:8px;top:6px;font-size:12px;font-weight:bold;color:#404040">Année</span></div>
<div class="c" style="left:254px;top:253px">Ecart Rémunération</div>
<div class="c d" style="left:498px;width:307px;top:223px;text-align:center">2018</div>
<div class="c d" style="left:805px;width:308px;top:223px;text-align:center">2019</div>
<div class="c d r" style="left:498px;width:299px;top:254px">219</div>
<div class="c d r" style="left:805px;width:298px;top:254px">335</div>
<!-- chart -->
<svg class="a" style="left:0;top:0" width="1916" height="968">
<g stroke="#d9d9d9" stroke-width="1">
<line x1="1200.5" y1="168" x2="1200.5" y2="354"/>
<line x1="1326.5" y1="168" x2="1326.5" y2="354"/>
<line x1="1451.5" y1="168" x2="1451.5" y2="354"/>
<line x1="1576.5" y1="168" x2="1576.5" y2="354"/>
<line x1="1701.5" y1="168" x2="1701.5" y2="354"/>
<line x1="1826.5" y1="168" x2="1826.5" y2="354"/>
<line x1="1200" y1="346.5" x2="1827" y2="346.5"/>
</g>
<rect x="1201" y="182" width="94" height="62" fill="#f85f4a"/>
<rect x="1295" y="182" width="178" height="62" fill="#4477aa"/>
<rect x="1201" y="270" width="205" height="62" fill="#f85f4a"/>
<rect x="1406" y="270" width="324" height="62" fill="#4477aa"/>
<rect x="1835" y="206" width="12" height="12" fill="#f85f4a"/>
<rect x="1835" y="227" width="12" height="12" fill="#4477aa"/>
</svg>
<div class="a" style="left:1134px;top:256px;transform:translate(-50%,-50%) rotate(-90deg);font-size:11px;color:#595959">Année, Genre</div>
<div class="c d r" style="left:1150px;width:47px;top:201px;font-size:12px">2018</div>
<div class="c d r" style="left:1150px;width:47px;top:290px;font-size:12px">2019</div>
<div class="c d" style="left:1477px;top:202px;font-size:10.5px;color:#737373">10<span style="font-family:'Liberation Sans'">,</span>85k</div>
<div class="c d" style="left:1735px;top:291px;font-size:10.5px;color:#737373">21<span style="font-family:'Liberation Sans'">,</span>13k</div>
<div class="c d" style="left:1170px;width:60px;top:361px;font-size:12px;text-align:center;color:#6e6e6e">0</div>
<div class="c d" style="left:1296px;width:60px;top:361px;font-size:12px;text-align:center;color:#6e6e6e">5k</div>
<div class="c d" style="left:1421px;width:60px;top:361px;font-size:12px;text-align:center;color:#6e6e6e">10k</div>
<div class="c d" style="left:1546px;width:60px;top:361px;font-size:12px;text-align:center;color:#6e6e6e">15k</div>
<div class="c d" style="left:1671px;width:60px;top:361px;font-size:12px;text-align:center;color:#6e6e6e">20k</div>
<div class="c d" style="left:1796px;width:60px;top:361px;font-size:12px;text-align:center;color:#6e6e6e">25k</div>
<div class="c" style="left:1414px;width:200px;top:383px;font-size:11.7px;text-align:center">Nb Salariés Comptabilisés</div>
<div class="a" style="left:1835px;top:175px;font-size:15px;color:#404040">Genre</div>
<div class="c" style="left:1855px;top:201px;font-size:12.3px">Femme</div>
<div class="c" style="left:1855px;top:222px;font-size:12.3px">Homme</div>
<svg class="a" style="left:0;top:0" width="1916" height="968"><circle cx="337.0" cy="190.3" r="4.2" fill="none" stroke="#404040" stroke-width="1.25"/><path d="M340.2,193.7 L343.4,196.7" stroke="#404040" stroke-width="1.8" stroke-linecap="round"/><circle cx="561.5" cy="190.3" r="4.2" fill="none" stroke="#404040" stroke-width="1.25"/><path d="M564.7,193.7 L567.9,196.7" stroke="#404040" stroke-width="1.8" stroke-linecap="round"/><circle cx="112.0" cy="476.0" r="4.2" fill="none" stroke="#595959" stroke-width="1.25"/><path d="M115.2,479.4 L118.4,482.4" stroke="#595959" stroke-width="1.8" stroke-linecap="round"/><circle cx="292.0" cy="476.0" r="4.2" fill="none" stroke="#595959" stroke-width="1.25"/><path d="M295.2,479.4 L298.4,482.4" stroke="#595959" stroke-width="1.8" stroke-linecap="round"/><circle cx="428.0" cy="476.0" r="4.2" fill="none" stroke="#595959" stroke-width="1.25"/><path d="M431.2,479.4 L434.4,482.4" stroke="#595959" stroke-width="1.8" stroke-linecap="round"/><circle cx="579.0" cy="476.0" r="4.2" fill="none" stroke="#595959" stroke-width="1.25"/><path d="M582.2,479.4 L585.4,482.4" stroke="#595959" stroke-width="1.8" stroke-linecap="round"/><circle cx="715.0" cy="476.0" r="4.2" fill="none" stroke="#595959" stroke-width="1.25"/><path d="M718.2,479.4 L721.4,482.4" stroke="#595959" stroke-width="1.8" stroke-linecap="round"/><circle cx="811.0" cy="476.0" r="4.2" fill="none" stroke="#595959" stroke-width="1.25"/><path d="M814.2,479.4 L817.4,482.4" stroke="#595959" stroke-width="1.8" stroke-linecap="round"/><path d="M54.2,503.4 L59,497.5 L63.6,503.4 Z" fill="#808080"/></svg>
<div class="a" style="left:0;top:961px;width:1916px;height:7px;background:#fff"></div>

</body></html>
